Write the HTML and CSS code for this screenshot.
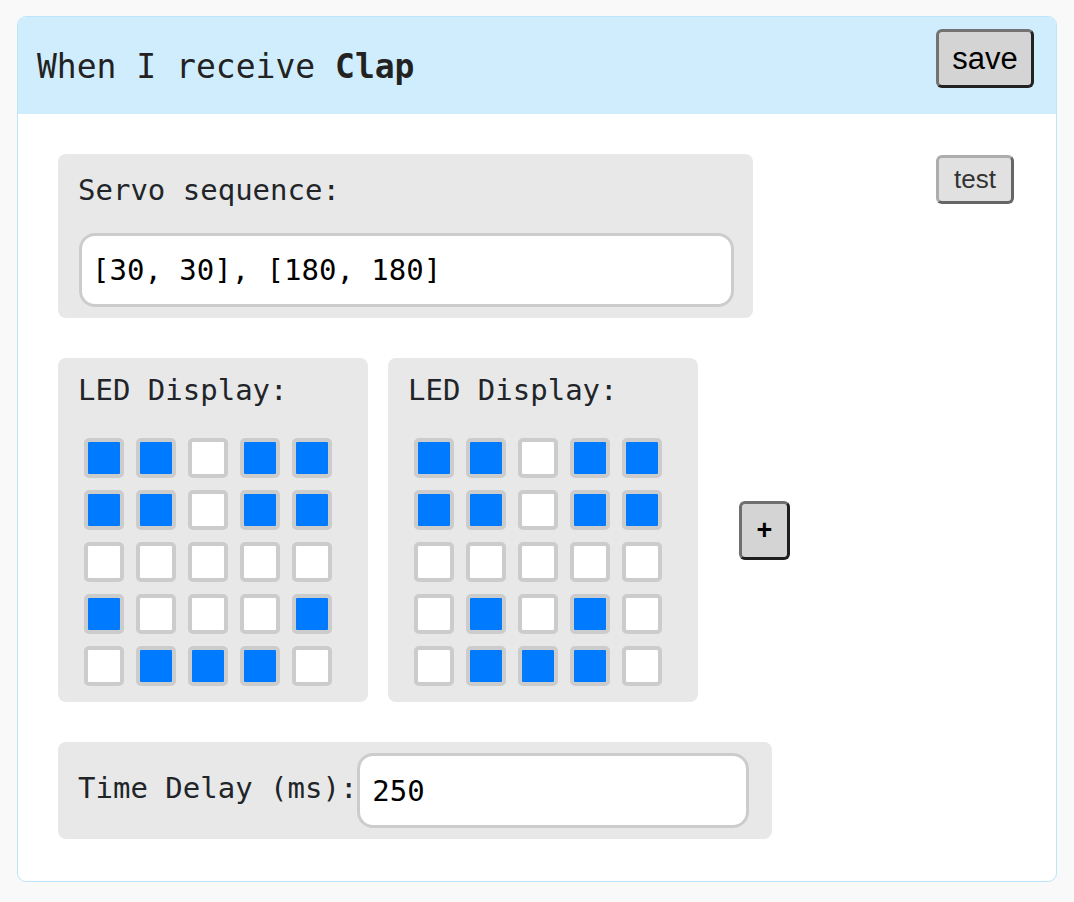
FILE: index.html
```html
<!DOCTYPE html>
<html>
<head>
<meta charset="utf-8">
<link rel="stylesheet" href="styles.css">
</head>
<body>
<div class="card">
  <div class="card-header">
    <h1 class="title">When I receive <b>Clap</b></h1>
    <button class="btn btn-save">save</button>
  </div>
  <div class="card-body">
    <div class="row row-servo">
      <div class="panel panel-servo">
        <div class="label">Servo sequence:</div>
        <input class="text-input servo-input" type="text" value="[30, 30], [180, 180]">
      </div>
      <button class="btn btn-test">test</button>
    </div>
    <div class="row row-led">
      <div class="panel panel-led">
        <div class="label">LED Display:</div>
        <div class="grid">
          <span class="cell on"></span><span class="cell on"></span><span class="cell"></span><span class="cell on"></span><span class="cell on"></span>
          <span class="cell on"></span><span class="cell on"></span><span class="cell"></span><span class="cell on"></span><span class="cell on"></span>
          <span class="cell"></span><span class="cell"></span><span class="cell"></span><span class="cell"></span><span class="cell"></span>
          <span class="cell on"></span><span class="cell"></span><span class="cell"></span><span class="cell"></span><span class="cell on"></span>
          <span class="cell"></span><span class="cell on"></span><span class="cell on"></span><span class="cell on"></span><span class="cell"></span>
        </div>
      </div>
      <div class="panel panel-led">
        <div class="label">LED Display:</div>
        <div class="grid">
          <span class="cell on"></span><span class="cell on"></span><span class="cell"></span><span class="cell on"></span><span class="cell on"></span>
          <span class="cell on"></span><span class="cell on"></span><span class="cell"></span><span class="cell on"></span><span class="cell on"></span>
          <span class="cell"></span><span class="cell"></span><span class="cell"></span><span class="cell"></span><span class="cell"></span>
          <span class="cell"></span><span class="cell on"></span><span class="cell"></span><span class="cell on"></span><span class="cell"></span>
          <span class="cell"></span><span class="cell on"></span><span class="cell on"></span><span class="cell on"></span><span class="cell"></span>
        </div>
      </div>
      <button class="btn btn-plus">+</button>
    </div>
    <div class="row">
      <div class="panel panel-delay">
        <div class="label label-delay">Time Delay (ms):</div>
        <input class="text-input delay-input" type="text" value="250">
      </div>
    </div>
  </div>
</div>
</body>
</html>
```
FILE: styles.css
```css
* {
  box-sizing: border-box;
}

body {
  margin: 16px 17px;
  background: #f9f9f9;
  font-family: "DejaVu Sans Mono", monospace;
  color: #212529;
}

.card {
  border: 1px solid #bde5fa;
  border-radius: 9px;
  background: #ffffff;
  overflow: hidden;
  height: 866px;
}

.card-header {
  display: flex;
  justify-content: space-between;
  align-items: flex-start;
  height: 97px;
  background: #d0edfd;
  padding: 0 22px 0 19px;
}

.title {
  align-self: center;
  margin: 2px 0 0;
  font-size: 33px;
  font-weight: normal;
  color: #222;
}

.title b {
  font-weight: bold;
}

.btn {
  font-family: "Liberation Sans", Arial, sans-serif;
  background: #d4d4d4;
  color: #000;
  border-style: solid;
  border-radius: 6px;
  padding: 0;
}

.btn-save {
  margin-top: 12px;
  width: 98px;
  height: 59px;
  font-size: 31px;
  border-width: 3px;
  border-color: #737373 #222 #222 #737373;
}

.card-body {
  padding: 40px 40px 0;
  display: flex;
  flex-direction: column;
  gap: 40px;
}

.row {
  display: flex;
  align-items: flex-start;
}

.panel {
  background: #e8e8e8;
  border-radius: 8px;
}

.label {
  font-size: 29px;
  line-height: 34px;
  color: #212529;
  white-space: nowrap;
}

.panel-servo {
  width: 695px;
  height: 164px;
  padding: 19px 20px 0 20px;
}

.text-input {
  font-family: "DejaVu Sans Mono", monospace;
  font-size: 29px;
  color: #000;
  background: #fff;
  border: 3px solid #cccccc;
  border-radius: 16px;
  outline: none;
}

.servo-input {
  display: block;
  margin: 26px 0 0 1px;
  width: 655px;
  height: 74px;
  padding: 0 10px;
}

.btn-test {
  margin-left: auto;
  margin-right: 2px;
  margin-top: 1px;
  width: 78px;
  height: 49px;
  font-size: 26px;
  color: #333;
  background: #e1e1e1;
  border-width: 3px;
  border-color: #adadad #666 #666 #adadad;
}

.row-led {
  align-items: center;
  gap: 20px;
}

.panel-led {
  width: 310px;
  height: 344px;
  padding: 15px 20px 0 20px;
}

.grid {
  display: grid;
  grid-template-columns: repeat(5, 40px);
  grid-auto-rows: 40px;
  gap: 12px;
  margin: 31px 0 0 6px;
}

.cell {
  display: block;
  background: #fff;
  border: 4px solid #cccccc;
  border-radius: 5px;
}

.cell.on {
  background: #007bff;
}

.btn-plus {
  margin-left: 21px;
  width: 51px;
  height: 59px;
  font-size: 27px;
  font-weight: bold;
  border-width: 3px;
  border-color: #6f6f6f #1f1f1f #1f1f1f #6f6f6f;
}

.panel-delay {
  display: flex;
  align-items: center;
  width: 714px;
  height: 97px;
  padding: 0 22px 0 20px;
}

.label-delay {
  margin-bottom: 6px;
}

.delay-input {
  width: 392px;
  height: 75px;
  padding: 0 12px;
}
```
